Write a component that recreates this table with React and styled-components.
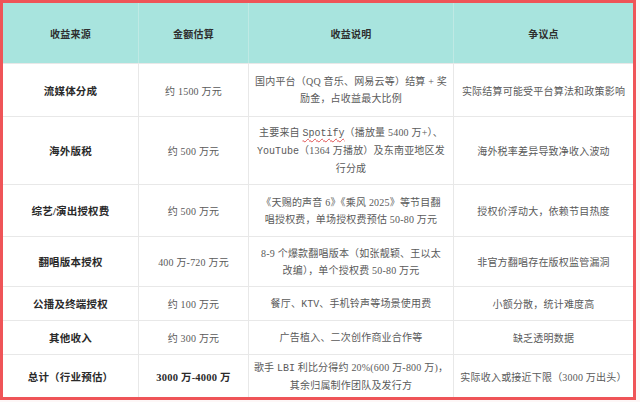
import React from 'react'
import styled, { createGlobalStyle } from 'styled-components';

const GlobalStyle = createGlobalStyle`
  html, body {
    margin: 0;
    padding: 0;
    background: #fdf7f7;
  }
  body {
    font-family: "Liberation Serif", "Noto Sans CJK SC", serif;
  }
`;

const Frame = styled.div`
  width: 636px;
  box-sizing: border-box;
  border: 3px solid #ef5458;
  background: #fff;
`;

const Table = styled.div`
  display: grid;
  grid-template-columns: 136px 110px 205px 179px;
`;

const HeadCell = styled.div`
  height: 60px;
  box-sizing: border-box;
  display: flex;
  align-items: center;
  justify-content: center;
  background: #a8e4de;
  border-right: ${(p) => (p.$last ? 'none' : '1px solid #bfe9e4')};
  color: #2e2e2e;
  font-weight: bold;
  font-size: 10px;
  letter-spacing: 0.2px;
`;

const Cell = styled.div`
  height: ${(p) => p.$h}px;
  box-sizing: border-box;
  display: flex;
  align-items: center;
  justify-content: center;
  text-align: center;
  border-top: 1px solid #e8e8e8;
  border-right: ${(p) => (p.$last ? 'none' : '1px solid #e8e8e8')};
  color: ${(p) => (p.$bold ? '#2a2a2a' : '#5a5a5a')};
  font-weight: ${(p) => (p.$bold ? 'bold' : 'normal')};
  font-size: ${(p) => (p.$bold ? '10.5px' : '10px')};
  letter-spacing: 0.2px;
  white-space: nowrap;
`;

const Lines = styled.div`
  display: flex;
  flex-direction: column;
  align-items: center;
  line-height: 17px;
`;

const Mono = styled.span`
  font-family: "Liberation Mono", "Noto Sans CJK SC", monospace;
  font-size: 10px;
  letter-spacing: 0;
`;

const Spell = styled(Mono)`
  text-decoration: underline wavy #e05050;
  text-decoration-thickness: 1px;
  text-underline-offset: 2px;
`;

const rows = [
  {
    source: '流媒体分成',
    amount: '约 1500 万元',
    desc: [<>国内平台（QQ 音乐、网易云等）结算 + 奖</>, <>励金，占收益最大比例</>],
    issue: '实际结算可能受平台算法和政策影响',
    height: 53,
  },
  {
    source: '海外版税',
    amount: '约 500 万元',
    desc: [
      <>主要来自 <Spell>Spotify</Spell>（播放量 5400 万+）、</>,
      <><Mono>YouTube</Mono>（1364 万播放）及东南亚地区发</>,
      <>行分成</>,
    ],
    issue: '海外税率差异导致净收入波动',
    height: 68,
  },
  {
    source: '综艺/演出授权费',
    amount: '约 500 万元',
    desc: [<>《天赐的声音 6》《乘风 2025》等节目翻</>, <>唱授权费，单场授权费预估 50-80 万元</>],
    issue: '授权价浮动大，依赖节目热度',
    height: 52,
  },
  {
    source: '翻唱版本授权',
    amount: '400 万-720 万元',
    desc: [<>8-9 个爆款翻唱版本（如张靓颖、王以太</>, <>改编），单个授权费 50-80 万元</>],
    issue: '非官方翻唱存在版权监管漏洞',
    height: 50,
  },
  {
    source: '公播及终端授权',
    amount: '约 100 万元',
    desc: [<>餐厅、<Mono>KTV</Mono>、手机铃声等场景使用费</>],
    issue: '小额分散，统计难度高',
    height: 34,
  },
  {
    source: '其他收入',
    amount: '约 300 万元',
    desc: [<>广告植入、二次创作商业合作等</>],
    issue: '缺乏透明数据',
    height: 34,
  },
  {
    source: '总计（行业预估）',
    amount: '3000 万-4000 万',
    strong: true,
    desc: [<>歌手 <Mono>LBI</Mono> 利比分得约 20%(600 万-800 万)，</>, <>其余归属制作团队及发行方</>],
    issue: '实际收入或接近下限（3000 万出头）',
    height: 43,
  },
];

export default function App() {
  return (
    <>
      <GlobalStyle />
      <Frame>
        <Table>
          <HeadCell>收益来源</HeadCell>
          <HeadCell>金额估算</HeadCell>
          <HeadCell>收益说明</HeadCell>
          <HeadCell $last>争议点</HeadCell>
          {rows.map((row) => (
            <React.Fragment key={row.source}>
              <Cell $h={row.height} $bold>{row.source}</Cell>
              <Cell $h={row.height} $bold={row.strong}>{row.amount}</Cell>
              <Cell $h={row.height}>
                <Lines>
                  {row.desc.map((line, i) => (
                    <span key={i}>{line}</span>
                  ))}
                </Lines>
              </Cell>
              <Cell $h={row.height} $last>{row.issue}</Cell>
            </React.Fragment>
          ))}
        </Table>
      </Frame>
    </>
  )
}
